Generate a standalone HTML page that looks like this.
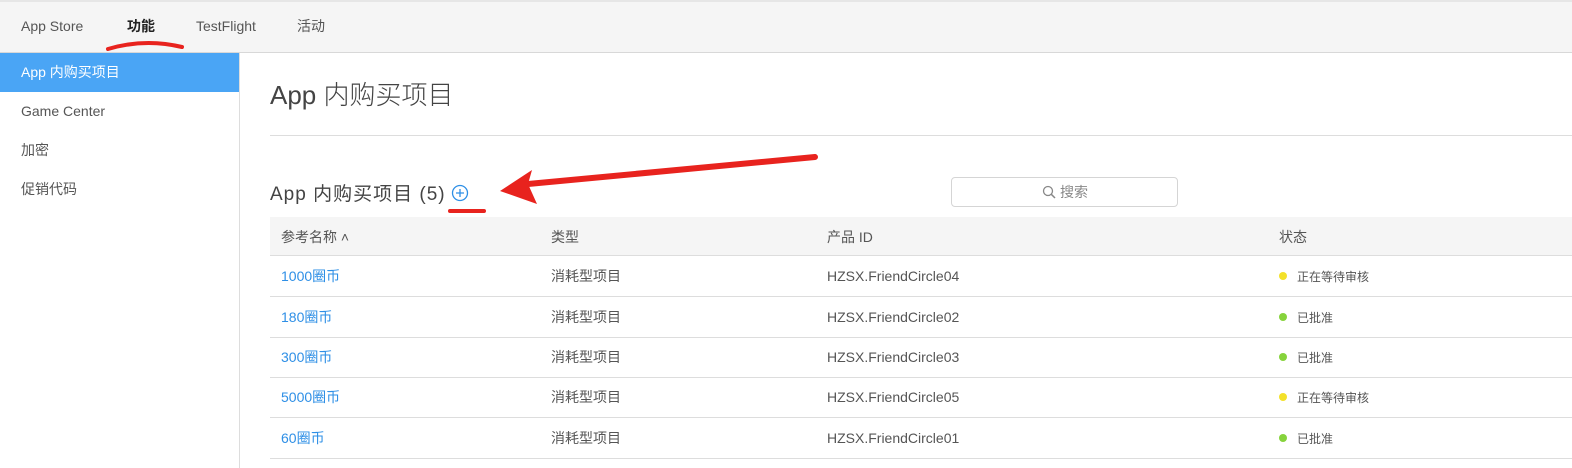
<!DOCTYPE html>
<html><head><meta charset="utf-8"><style>
*{margin:0;padding:0;box-sizing:border-box}
body{width:1572px;height:468px;overflow:hidden;background:#fff;font-family:"Liberation Sans","Noto Sans CJK SC",sans-serif;color:#444;position:relative}
.nav{position:absolute;left:0;top:0;width:1572px;height:53px;background:#f5f5f5;border-top:2px solid #e6e6e6;border-bottom:1px solid #d8d8d8}
.nav span{position:absolute;top:14px;font-size:14px;line-height:20px;color:#555}
.side{position:absolute;left:0;top:53px;width:240px;height:415px;border-right:1px solid #ddd}
.side div{height:39px;line-height:38px;padding-left:21px;font-size:14px;color:#555}
.side .sel{background:#4aa5f5;color:#fff}
.h1{position:absolute;left:270px;top:79px;font-size:26px;line-height:32px;color:#444;font-weight:300}
.hr{position:absolute;left:270px;top:135px;width:1302px;height:1px;background:#ddd}
.h2{position:absolute;left:270px;top:182px;font-size:19px;line-height:26px;color:#444;letter-spacing:1px}
.search{position:absolute;left:951px;top:177px;width:227px;height:30px;border:1px solid #d5d5d5;border-radius:4px;font-size:14px;color:#888;line-height:28px}
.thead{position:absolute;left:270px;top:217px;width:1302px;height:39px;background:#f5f5f5;border-bottom:1px solid #ddd}
.row{position:absolute;left:270px;width:1302px;height:41px;border-bottom:1px solid #ddd}
.row span,.thead span{position:absolute;top:10px;font-size:14px;line-height:20px;color:#555}
.a{color:#2e8fe6!important}
.dot{position:absolute;top:16px;left:1009px;width:8px;height:8px;border-radius:50%}
.st{font-size:12px!important;top:11px!important;left:1027px;color:#555!important}
</style></head><body>
<div class="nav">
<span style="left:21px">App Store</span>
<span style="left:127px;font-weight:bold;color:#222">功能</span>
<span style="left:196px">TestFlight</span>
<span style="left:297px">活动</span>
</div>
<div class="side">
<div class="sel">App 内购买项目</div>
<div>Game Center</div>
<div>加密</div>
<div>促销代码</div>
</div>
<div class="h1">App 内购买项目</div>
<div class="hr"></div>
<div class="h2">App 内购买项目 (5)</div>
<svg style="position:absolute;left:451px;top:184px" width="18" height="18"><circle cx="9" cy="9" r="7.5" fill="none" stroke="#2e8fe6" stroke-width="1.3"/><path d="M9 5V13M5 9H13" stroke="#2e8fe6" stroke-width="1.3"/></svg>
<div class="search"><svg style="position:absolute;left:90px;top:7px" width="14" height="14"><circle cx="6" cy="6" r="4.5" fill="none" stroke="#888" stroke-width="1.3"/><path d="M9.3 9.3L13 13" stroke="#888" stroke-width="1.5"/></svg><span style="position:absolute;left:108px;top:0">搜索</span></div>
<div class="thead"><span style="left:11px">参考名称 ˄</span><span style="left:281px">类型</span><span style="left:557px">产品 ID</span><span style="left:1009px">状态</span></div>
<div class="row" style="top:256px"><span class="a" style="left:11px">1000圈币</span><span style="left:281px">消耗型项目</span><span style="left:557px">HZSX.FriendCircle04</span><i class="dot" style="background:#f3e12a"></i><span class="st">正在等待审核</span></div>
<div class="row" style="top:297px"><span class="a" style="left:11px">180圈币</span><span style="left:281px">消耗型项目</span><span style="left:557px">HZSX.FriendCircle02</span><i class="dot" style="background:#86d33c"></i><span class="st">已批准</span></div>
<div class="row" style="top:337px"><span class="a" style="left:11px">300圈币</span><span style="left:281px">消耗型项目</span><span style="left:557px">HZSX.FriendCircle03</span><i class="dot" style="background:#86d33c"></i><span class="st">已批准</span></div>
<div class="row" style="top:377px"><span class="a" style="left:11px">5000圈币</span><span style="left:281px">消耗型项目</span><span style="left:557px">HZSX.FriendCircle05</span><i class="dot" style="background:#f3e12a"></i><span class="st">正在等待审核</span></div>
<div class="row" style="top:418px"><span class="a" style="left:11px">60圈币</span><span style="left:281px">消耗型项目</span><span style="left:557px">HZSX.FriendCircle01</span><i class="dot" style="background:#86d33c"></i><span class="st">已批准</span></div>
<svg style="position:absolute;left:0;top:0" width="1572" height="468">
<path d="M108 49 Q145 38 182 47" stroke="#e8231e" stroke-width="4" fill="none" stroke-linecap="round"/>
<path d="M450 211 L484 211" stroke="#e8231e" stroke-width="4" stroke-linecap="round"/>
<path d="M815 157 L528 184" stroke="#e8231e" stroke-width="6" stroke-linecap="round"/>
<path d="M500 191 L532 170 L528 184 L537 204 Z" fill="#e8231e"/>
</svg>
</body></html>
